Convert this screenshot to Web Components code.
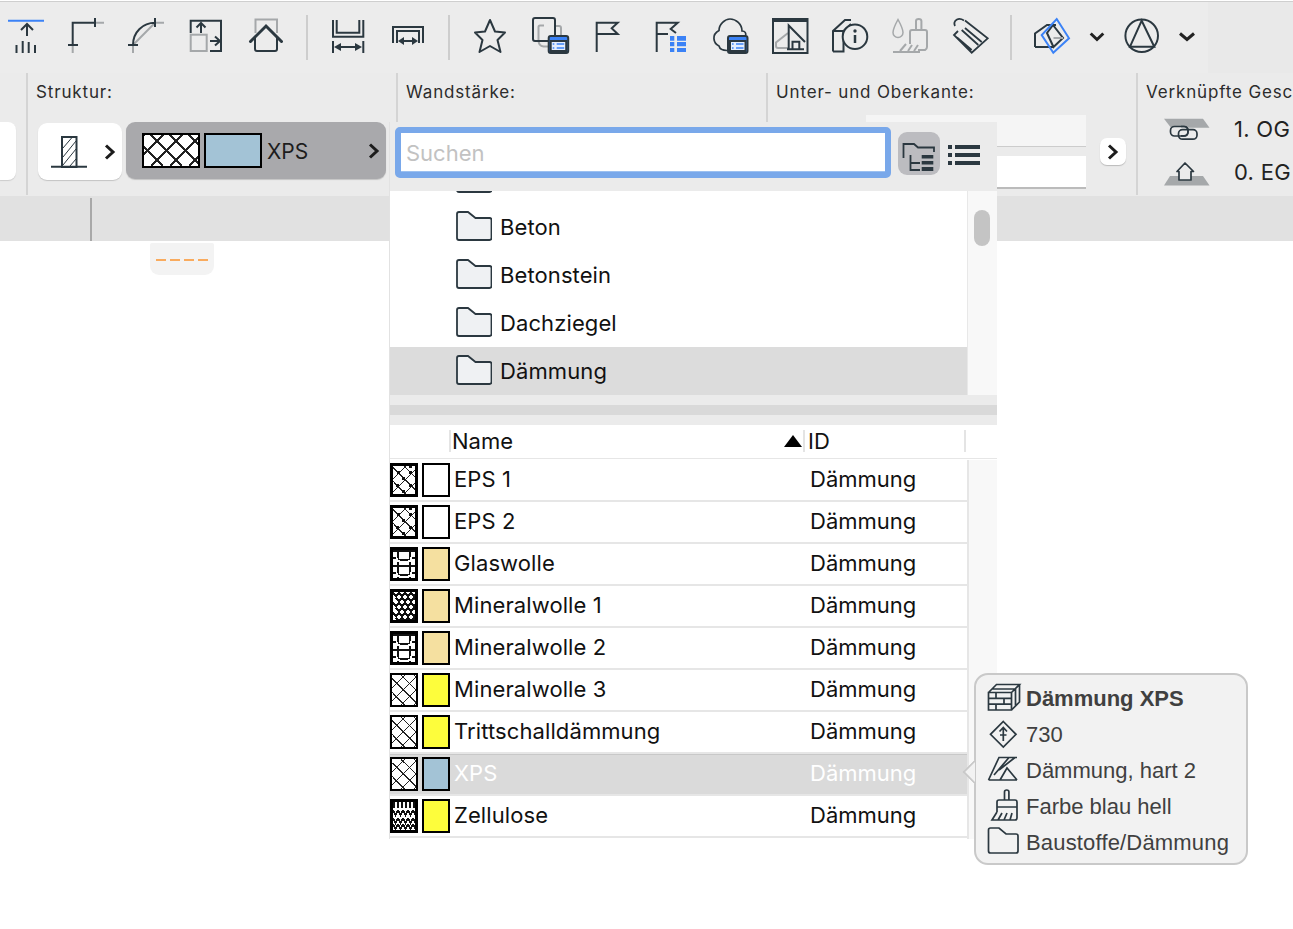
<!DOCTYPE html>
<html lang="de"><head><meta charset="utf-8"><title>Struktur</title>
<style>
html,body{margin:0;padding:0;background:#fff;height:100%;overflow:hidden}
body{font-family:Inter,"Liberation Sans",sans-serif;color:#111;width:1293px;height:929px;position:relative}
</style></head><body>
<app-shell>
  <main-toolbar></main-toolbar>
  <info-box></info-box>
  <sub-band></sub-band>
  <dash-tag></dash-tag>
  <material-popup>
    <folder-row clipped></folder-row>
    <folder-row>Beton</folder-row>
    <folder-row>Betonstein</folder-row>
    <folder-row>Dachziegel</folder-row>
    <folder-row selected>Dämmung</folder-row>
    <mat-row slot="rows" pattern="dots" color="#ffffff" name="EPS 1"></mat-row>
    <mat-row slot="rows" pattern="dots" color="#ffffff" name="EPS 2"></mat-row>
    <mat-row slot="rows" pattern="glas" color="#f5e0a0" name="Glaswolle"></mat-row>
    <mat-row slot="rows" pattern="dense" color="#f5e0a0" name="Mineralwolle 1"></mat-row>
    <mat-row slot="rows" pattern="glas" color="#f5e0a0" name="Mineralwolle 2"></mat-row>
    <mat-row slot="rows" pattern="cross" color="#fdfd3c" name="Mineralwolle 3"></mat-row>
    <mat-row slot="rows" pattern="cross" color="#fdfd3c" name="Trittschalldämmung"></mat-row>
    <mat-row slot="rows" pattern="cross" color="#a3c3d6" name="XPS" selected></mat-row>
    <mat-row slot="rows" pattern="zig" color="#fdfd3c" name="Zellulose"></mat-row>
  </material-popup>
  <info-tip></info-tip>
</app-shell>
<script>
const DK='#2b3840',GR='#a5a8aa',BL='#3b82f6';
const card=(x,y)=>`<rect x="${x}" y="${y}" width="19.500" height="17" rx="2" fill="${BL}"/><rect x="${x+2}" y="${y+5}" width="15.500" height="10" fill="#e3edfe"/><path d="M${x+4} ${y+8}h1.600M${x+8} ${y+8}h7.500M${x+4} ${y+12}h1.600M${x+8} ${y+12}h7.500" stroke="${BL}" stroke-width="1.600" fill="none"/>`;
const TB=[
 {w:57,x:0,b:`<path d="M8 20.700H44" stroke="${BL}" stroke-width="2"/><path d="M27 36V24M21 30l6-6 6 6M16.500 53V45M22.700 53V41M28.700 53V42M35 53V45"/>`},
 {w:60,x:57,b:`<path d="M104 22.700H95M72.700 45v8" stroke="${GR}"/><path d="M72.700 45V22.700H95M95 18v9M68 45h10"/>`},
 {w:60,x:117,b:`<path d="M164 22.700H155L133 45v8" stroke="${GR}"/><path d="M133 45C133 32 143 22.700 155 22.700M155 18v9M128 45h10"/>`},
 {w:60,x:177,b:`<rect x="190.700" y="34.700" width="16" height="16.300" stroke="${GR}"/><path d="M190.700 33V20.700H221V51H210M201 33V23M196.500 27.500l4.500-4.500 4.500 4.500M210 41h10M215 36.500l5 4.500-5 4.500"/>`},
 {w:60,x:237,b:`<path d="M255.500 33V19.500H277V33" stroke="${GR}"/><path d="M250.500 41.500L266 26l15.500 15.500" stroke-width="3" stroke-linecap="round"/><path d="M255 37V49q0 2 2 2H275q2 0 2-2V37"/>`},
 {sep:20},
 {w:60,x:317,b:`<path d="M333 20V36.700H363.300V20M336.700 20V32.700H359.300V20M333 41V53M363.300 41V53M337 47H359"/><path d="M334 47l7-4v8zM362 47l-7-4v8z" fill="${DK}" stroke="none"/>`},
 {w:60,x:377,b:`<path d="M393 43V27H423V43M397 43V31H419V43M402 41H414"/><path d="M398 41l6-4v8zM418 41l-6-4v8z" fill="${DK}" stroke="none"/>`},
 {sep:23},
 {w:60,x:460,b:`<path d="M490 20l5 11.500 10 1-7.500 7.500 3 12-10.500-6-10.500 6 3-12-7.500-7.500 10-1z" stroke-linejoin="round"/>`},
 {w:60,x:520,b:`<path d="M544 25.500H540q-1.500 0-1.500 1.500V40q0 6 5 6.500H549M556 26h3q2 0 2 2v8" stroke="${GR}"/><path d="M548 41H535q-2 0-2-2V20q0-2 2-2H553q2 0 2 2V36"/>${card(548.700,36)}`},
 {w:60,x:580,b:`<path d="M596.700 52V22.700H617.700L611.700 28.300 617.700 34H596.700"/>`},
 {w:60,x:640,b:`<path d="M656.700 52V22.700H677.700L670.700 29 676 33M656.700 34H668"/><path d="M670 36h4.300v4.700H670zM677 36h9v4.700h-9zM670 42h4.300v4.300H670zM677 42h9v4.300h-9zM670 48h4.300v4H670zM677 48h9v4h-9z" fill="${BL}" stroke="none"/>`},
 {w:60,x:700,b:`<path d="M727 50.500C722 50.500 719.500 48 719 46 713 43 711.500 34.500 719 30.500 719 24 725 19 730 19 736 19 742 24 742 31 745 31 746.500 33 745.500 36" stroke-width="1.700"/>${card(728,36)}`},
 {w:60,x:760,b:`<rect x="773" y="19" width="34.500" height="34"/><path d="M772 20H808" stroke-width="4"/><path d="M788 33L776 42.500V46q0 2 2 2H788" stroke="${GR}"/><path d="M788.700 49.300V25.500L805 42M787 49.300H804M792.500 49V41.700H799.300V49"/>`},
 {w:60,x:820,b:`<path d="M833 51.500V31L845 20H851M833 31H843.500V51.500H833M843.500 31L851 24"/><circle cx="855" cy="36.700" r="12.300" fill="#ececec"/><circle cx="855" cy="31" r="1.700" fill="${DK}" stroke="none"/><path d="M855 35V43" stroke-width="2.500"/>`},
 {w:60,x:880,b:`<g stroke="${GR}"><path d="M898 19.500C895 25 893 29 893 32.500a5 5 0 0 0 10 0C903 29 901 25 898 19.500z" stroke-width="1.500"/><path d="M916 29V21q0-2 2.700-2t2.700 2V29M910 44V32q0-2 2-2H925q2 0 2 2V47q0 2-2 3H918"/><path d="M893 52H920M906 44l-6 7M912 45l-4 6M918 45l-4 6"/></g>`},
 {w:60,x:940,b:`<path d="M965 20.500L987.700 38.300 971.700 52.700 954 35L958 31M957 37.500L971.700 50M964 20.500Q960 18 957 19.500Q953 22 955 26M961.700 30L978.300 45M965 28L981.700 42" stroke-width="1.800"/>`},
 {sep:21},
 {w:60,x:1021,b:`<path d="M1035 47V33.500L1047 25H1056M1035 47H1053"/><path d="M1053 25L1063 38 1053.500 47 1047 33z"/><path d="M1053.500 38H1063" stroke="${GR}"/><path d="M1056.700 19L1069 38.300 1053.300 52.700 1041.700 35z" stroke="${BL}"/>`},
 {w:31,x:1081,b:`<path d="M1090.700 33.500L1097 39.500 1103.300 33.500" stroke="#222" stroke-width="3"/>`},
 {w:60,x:1112,b:`<circle cx="1141.700" cy="35.700" r="16.300"/><path d="M1141.700 20.700L1154.300 46.700H1130z"/>`},
 {w:30,x:1172,b:`<path d="M1180 33.500L1187 39.500 1194 33.500" stroke="#222" stroke-width="3"/>`},
];
class MainToolbar extends HTMLElement{constructor(){super();const r=this.attachShadow({mode:'open'});
 r.innerHTML=`<style>:host{display:flex;height:73px;box-sizing:border-box;padding-top:2px;background:linear-gradient(#fff 1px,#cfcfcf 1px,#cfcfcf 2px,#ececec 2px);overflow:hidden}
 svg{display:block;flex:none;margin-top:8px;fill:none;stroke:${DK};stroke-width:2}
 .sep{flex:none;display:flex;justify-content:center;padding-top:13px;box-sizing:border-box;height:58px}
 .sep i{display:block;width:2px;background:#cdcdcd}
 .end{margin-left:auto;width:85px;background:#e9e9e9}</style>`+
 TB.map(t=>t.sep?`<div class="sep" style="width:${t.sep}px"><i></i></div>`:`<svg width="${t.w}" height="52" viewBox="${t.x} 10 ${t.w} 52">${t.b}</svg>`).join('')+`<div class="end"></div>`;}}
customElements.define('main-toolbar',MainToolbar);

class MatSwatch extends HTMLElement{constructor(){super();this.attachShadow({mode:'open'});}
 connectedCallback(){
  const w=+this.getAttribute('w')||28,h=+this.getAttribute('h')||34,c=this.getAttribute('color'),p=this.getAttribute('pattern');
  const heavy=['dots','glas','dense','zig'].includes(p);
  const bw=heavy?3:2;
  let s='';
  const iw=w-2*bw,ih=h-2*bw;
  if(p&&p!=='null'){
   if(p==='dots'||p==='cross'||p==='big'){
    const per=p==='big'?19:13,sw=p==='big'?1.600:1.400;let d='';
    for(let k=-ih;k<iw+ih;k+=per){d+=`M${k} 0L${k+ih} ${ih}M${k+ih} 0L${k} ${ih}`;}
    s=`<path d="${d}" stroke="#222" stroke-width="${sw}" fill="none"/>`;
    if(p==='dots'){s+=`<path d="M16 0h3v2h-3zM4 5h3v3h-3zM16 5h3v3h-3zM9 11h3v3h-3zM3 18h3v3h-3zM16 18h3v3h-3zM9 24h3v3h-3z" fill="#111"/>`;}
   }else if(p==='glas'){
    let d='';for(let y=-3;y<ih;y+=15){d+=`M0 ${y+4}H${iw}M5 ${y}V${y+4}M17 ${y}V${y+4}M5 ${y+4}V${y+10}Q5 ${y+12} 7 ${y+13}H15Q17 ${y+12} 17 ${y+10}V${y+4}M0 ${y+11}H3M19 ${y+11}H${iw}`;}
    s=`<path d="${d}" stroke="#111" stroke-width="1.300" fill="none"/>`;
   }else if(p==='dense'){
    let d='';for(let y=1;y<ih;y+=5){for(let x=(y%2?0:3);x<iw;x+=6){d+=`M${x} ${y}l3 3 3-3`;}}
    s=`<path d="${d}" stroke="#111" stroke-width="1.500" fill="none"/>`;
   }else if(p==='zig'){
    let d='';for(let x=1;x<iw;x+=4){d+=`M${x} 0v6`;}
    for(const y of [8,16,22]){for(let x=0;x<iw;x+=5){d+=`M${x} ${y}l2.500 5 2.500-5`;}}
    s=`<path d="${d}" stroke="#111" stroke-width="1.500" fill="none"/>`;
   }
  }
  this.shadowRoot.innerHTML=`<style>:host{display:block;flex:none;width:${w}px;height:${h}px;box-sizing:border-box;border:${bw}px solid #000;background:${c}}svg{display:block}</style>${s?`<svg width="${iw}" height="${ih}" viewBox="0 0 ${iw} ${ih}" shape-rendering="crispEdges">${s}</svg>`:''}`;
 }}
customElements.define('mat-swatch',MatSwatch);

class InfoSection extends HTMLElement{constructor(){super();const r=this.attachShadow({mode:'open'});
 r.innerHTML=`<style>:host{display:block;flex:none;box-sizing:border-box;border-left:2px solid #d4d4d4;height:122px;overflow:hidden}
 .l{height:35px;line-height:36px;padding:1px 0 0 8px;font-size:17px;letter-spacing:.85px;color:#2c2c2c;white-space:nowrap}</style>
 <div class="l"></div><slot></slot>`;}
 connectedCallback(){this.shadowRoot.querySelector('.l').textContent=this.getAttribute('label')||'';}}
customElements.define('info-section',InfoSection);

const chev=()=>`<svg width="14" height="18" viewBox="0 0 14 18"><path d="M3 2.500L10 9 3 15.500" fill="none" stroke="#1c1c1c" stroke-width="3"/></svg>`;
class InfoBox extends HTMLElement{constructor(){super();const r=this.attachShadow({mode:'open'});
 r.innerHTML=`<style>:host{display:flex;height:123px;background:#ebebeb;overflow:hidden}
 .pre{flex:none;width:26px;box-sizing:border-box;padding-top:49px}
 .pre i{display:block;width:16px;height:58px;background:#fff;border-radius:0 8px 8px 0;box-shadow:0 1px 1px #ccc}
 .st{display:flex;gap:4px;padding:13px 0 0 8px;align-items:flex-start}
 .b1{width:84px;height:57px;margin-left:2px;margin-top:1px;background:#fff;border-radius:9px;box-shadow:0 1px 1px #c4c4c4;display:flex;align-items:center;flex:none}
 .b2{width:260px;height:57px;background:#a9a9ac;border-radius:9px;box-shadow:0 1px 1px #c4c4c4;display:flex;align-items:center;flex:none;padding-left:16px;box-sizing:border-box;gap:4px;font-size:21px;color:#1d1d1d}
 .b2 span{margin:2px 0 0 1px;flex:1}.b2 svg{margin-right:5px}
 .un{padding:6px 0 0 98px;display:flex;gap:14px}
 .fs{width:220px;display:flex;flex-direction:column;gap:9px;flex:none}
 .f1{height:32px;background:#f5f5f5;border-bottom:1px solid #ccc;box-sizing:border-box}
 .f2{height:33px;background:#fff;border-bottom:2px solid #bbb;box-sizing:border-box}
 .go{width:26px;height:27px;margin-top:23px;background:#fff;border-radius:7px;box-shadow:0 1px 1px #bbb;display:flex;align-items:center;justify-content:center;flex:none}
 .ln{display:flex;align-items:center;height:42px;font-size:22px;color:#222;white-space:nowrap;padding-left:22px}
 .ln svg{flex:none;margin-right:19px;fill:none;stroke:${DK};stroke-width:1.700}
 .ln span{letter-spacing:.3px}
 .ln.up span{margin-top:-2px}
 </style>
 <div class="pre"><i></i></div>
 <info-section label="Struktur:" style="width:370px"><div class="st">
  <div class="b1"><svg width="56" height="57" viewBox="38 123 56 57" fill="none" stroke="${DK}" stroke-width="1.600"><rect x="62" y="137" width="14.500" height="30" stroke-width="2"/><path d="M51 166.700H87" stroke-width="2"/><path d="M63 148L72 137.500M63 157L76 141M63 165L76 149M70 166L76 159" stroke-width="1"/></svg><span style="margin-left:9px;display:flex">${chev()}</span></div>
  <div class="b2"><mat-swatch w="58" h="35" pattern="big" color="#fff"></mat-swatch><mat-swatch w="58" h="35" color="#a3c3d6"></mat-swatch><span>XPS</span>${chev()}</div>
 </div></info-section>
 <info-section label="Wandstärke:" style="width:370px"></info-section>
 <info-section label="Unter- und Oberkante:" style="width:370px"><div class="un"><div class="fs"><div class="f1"></div><div class="f2"></div></div><div class="go">${chev()}</div></div></info-section>
 <info-section label="Verknüpfte Gesc" style="width:157px">
  <div class="ln up"><svg width="55" height="42" viewBox="1160 108 55 42"><path d="M1164 117.700H1203L1209.500 126.700H1171z" fill="${GR}" stroke="none"/><rect x="1170.500" y="125.500" width="17.500" height="9.500" rx="4" fill="#ebebeb"/><rect x="1178.500" y="128.700" width="18.500" height="9.500" rx="4"/><path d="M1181 125.500H1184q4 0 4 4.700t-4 4.700H1181"/></svg><span>1. OG</span></div>
  <div class="ln"><svg width="55" height="42" viewBox="1160 150 55 42"><path d="M1170 175H1203L1209.500 184.500H1164z" fill="${GR}" stroke="none"/><path d="M1177 170.500L1185 162 1193.500 170.500H1191V179H1179V170.500z" fill="#ebebeb" stroke-linejoin="round"/></svg><span>0. EG</span></div>
 </info-section>`;}}
customElements.define('info-box',InfoBox);

class SubBand extends HTMLElement{constructor(){super();const r=this.attachShadow({mode:'open'});
 r.innerHTML=`<style>:host{display:block;height:45px;background:#e1e1e1;box-sizing:border-box;padding:2px 0 0 90px}i{display:block;width:2px;height:43px;background:#a8a8a8}</style><i></i>`;}}
customElements.define('sub-band',SubBand);

class DashTag extends HTMLElement{constructor(){super();const r=this.attachShadow({mode:'open'});
 r.innerHTML=`<style>:host{position:absolute;left:150px;top:243px;width:64px;height:32px;background:#f3f3f3;border-radius:2px 2px 9px 9px;display:flex;gap:4px;padding:16px 6px 0;box-sizing:border-box}
 i{display:block;width:10px;height:2px;background:#f9ab5e}</style><i></i><i></i><i></i><i></i>`;}}
customElements.define('dash-tag',DashTag);

class FolderRow extends HTMLElement{constructor(){super();const r=this.attachShadow({mode:'open'});
 r.innerHTML=`<style>:host{display:flex;align-items:center;height:48px;font-size:22px;letter-spacing:.1px;color:#111;padding-left:66px;box-sizing:border-box}
 :host([selected]){background:#dcdcdc}
 svg{flex:none;margin-right:8px;margin-top:-2px}</style>
 <svg width="36" height="30" viewBox="456 211 36 30"><path d="M457 238V214q0-2 2-2H468L475.500 218H489.500q2 0 2 2V238q0 2-2 2H459q-2 0-2-2z" fill="#eff1f3" stroke="${DK}" stroke-width="1.800"/></svg><slot></slot>`;}}
customElements.define('folder-row',FolderRow);

class MatRow extends HTMLElement{constructor(){super();this.attachShadow({mode:'open'});}
 connectedCallback(){const g=a=>this.getAttribute(a);
 this.shadowRoot.innerHTML=`<style>:host{display:flex;align-items:center;height:42px;box-sizing:border-box;border-bottom:2px solid #e6e6e6;gap:4px;font-size:22px;color:#111}
 :host([selected]){background:#dadada;color:#fff;box-shadow:inset 0 1px 0 #c8c8c8}
 .n{width:352px;flex:none;letter-spacing:.1px;margin-top:-2px}.i{flex:none;margin-top:-2px}</style>
 <mat-swatch pattern="${g('pattern')}" color="#fff"></mat-swatch><mat-swatch color="${g('color')}"></mat-swatch><div class="n"></div><div class="i">Dämmung</div>`;
 this.shadowRoot.querySelector('.n').textContent=g('name');}}
customElements.define('mat-row',MatRow);

class MaterialPopup extends HTMLElement{constructor(){super();const r=this.attachShadow({mode:'open'});
 r.innerHTML=`<style>:host{position:absolute;left:389px;top:122px;width:608px;height:717px;display:flex;flex-direction:column;background:#ebebeb;box-sizing:border-box;border-left:1px solid #e2e2e2;font-size:22px;color:#111}
 .head{height:69px;flex:none;display:flex;padding:5px 0 0 5px;box-sizing:border-box;align-items:flex-start}
 .search{width:496px;height:51px;box-sizing:border-box;border:6px solid #79a8ea;border-radius:5px;background:#fff;color:#c2c2c2;padding-left:5px;line-height:40px;flex:none;box-shadow:inset 0 -1px 0 #9cc0f0}
 .tg{width:42px;height:43px;background:#bcbcc0;border-radius:9px;margin:5px 0 0 7px;flex:none}
 .lst{margin:18px 0 0 8px;flex:none}
 .tree{height:204px;flex:none;display:flex;background:#fff;overflow:hidden}
 .tree .c{width:577px;flex:none;height:204px;overflow:hidden}
 .tree .in{margin-top:-36px}
 .sb{flex:1;background:#f8f8f8;border-left:1px solid #e8e8e8;padding:19px 0 0 6px;box-sizing:border-box}
 .sb i{display:block;width:16px;height:36px;border-radius:8px;background:#c4c4c4}
 .split{height:30px;flex:none;box-sizing:border-box;padding-top:10px}.split i{display:block;height:10px;background:#d9d9d9}
 .th{height:35px;flex:none;box-sizing:border-box;display:flex;align-items:center;background:linear-gradient(#fff 33px,#e6e6e6 33px,#e6e6e6 34px,#fff 34px);padding-bottom:3px}
 .th .s{width:2px;height:22px;background:#e4e4e4;flex:none;margin-top:-1px}
 .th span{margin-left:1px;margin-top:-1px}
 .tri{width:0;height:0;border-left:9.500px solid transparent;border-right:9.500px solid transparent;border-bottom:12px solid #000;flex:none;margin:0 1px 0 0}
 .body{display:flex;flex:1;background:#fff}
 .rows{width:577px;flex:none}
 .tr{flex:1;background:#f8f8f8;border-left:2px solid #e6e6e6;box-sizing:border-box}</style>
 <div class="head"><div class="search">Suchen</div>
 <div class="tg"><svg width="42" height="43" viewBox="898 132 42 43" fill="none" stroke="${DK}" stroke-width="1.800"><path d="M903.500 158V144H914L918 147.500H934V152M910.500 155V170H920M910.500 163H920"/><path d="M921.700 155H933.300V158.500H921.700zM921.700 161H933.300V164.500H921.700zM921.700 167H933.300V171H921.700z" fill="${DK}" stroke="none"/></svg></div>
 <svg class="lst" width="32" height="20" viewBox="948 145 32 20" fill="${DK}"><path d="M948 145h4v4h-4zM955 145h25v4h-25zM948 153h4v4h-4zM955 153h25v4h-25zM948 161h4v4h-4zM955 161h25v4h-25z"/></svg></div>
 <div class="tree"><div class="c"><div class="in"><slot></slot></div></div><div class="sb"><i></i></div></div>
 <div class="split"><i></i></div>
 <div class="th"><div style="width:59px;flex:none"></div><div class="s"></div><span style="width:332px;flex:none">Name</span><div class="tri"></div><div class="s"></div><span style="width:156px;flex:none;margin-left:3px">ID</span><div class="s"></div></div>
 <div class="body"><div class="rows"><slot name="rows"></slot></div><div class="tr"></div></div>`;}}
customElements.define('material-popup',MaterialPopup);

const TIP=[
 {t:'Dämmung XPS',b:1,i:`<path d="M988.500 692.500H1011.500V710H988.500zM988.500 692.500L996.500 684.500H1019.500L1011.500 692.500M1019.500 684.500V702L1011.500 710M988.500 698.300H1011.500M988.500 704.200H1011.500M996 692.500V698.300M1004 698.300V704.200M996 704.200V710M1015.500 688.500V706M992 689H1015"/>`},
 {t:'730',i:`<path d="M1003.300 721.500L1016 734.300 1003.300 747 990.500 734.300zM1003.300 741V728M999.500 731.500L1003.300 727.500 1007 731.500M1000 735H1006.500"/>`},
 {t:'Dämmung, hart 2',i:`<path d="M988.500 780H1017M988.500 780L999 757.500H1017M994 775L1009 757.500M999 770L1015 757.500M1000 780L1007 768L1017 780"/>`},
 {t:'Farbe blau hell',i:`<path d="M1004.500 800V792q0-2 2.200-2t2.200 2V800M997 812V802q0-2 2-2H1015q2 0 2 2V818q0 2-2 2H992L997 812M997 807H1017M998 820L1002 813M1004 820L1007 813M1010 820L1012 813"/>`},
 {t:'Baustoffe/Dämmung',i:`<path d="M988.500 851V830q0-2 2-2H999L1006 834H1016q2 0 2 2V851q0 2-2 2H990.500q-2 0-2-2z"/>`},
];
class InfoTip extends HTMLElement{constructor(){super();const r=this.attachShadow({mode:'open'});
 r.innerHTML=`<style>:host{position:absolute;left:974px;top:673px;width:274px;height:192px;box-sizing:border-box;background:#f2f2f2;border:2px solid #c9c9c9;border-radius:14px;padding:6px 0 0 10px;font-family:"Liberation Sans",Arial,sans-serif;font-size:22px;color:#404040;font-variant-ligatures:none}
 .r{display:flex;align-items:center;height:36px;white-space:nowrap}
 .r:last-of-type span{letter-spacing:.17px}
 svg{flex:none;margin-right:4px;margin-top:-2px;fill:none;stroke:${DK};stroke-width:1.700}
 .b{font-weight:700}
 .a{position:absolute;left:-10px;top:88px;width:18px;height:18px;background:#f2f2f2;transform:rotate(45deg);border-left:2px solid #c9c9c9;border-bottom:2px solid #c9c9c9;box-sizing:border-box;clip-path:polygon(0 0,0 100%,100% 100%)}</style><div class="a"></div>`+
 TIP.map((t,k)=>`<div class="r"><svg width="36" height="36" viewBox="986 ${680+36*k} 36 36">${t.i}</svg><span class="${t.b?'b':''}">${t.t}</span></div>`).join('');}}
customElements.define('info-tip',InfoTip);

class AppShell extends HTMLElement{constructor(){super();const r=this.attachShadow({mode:'open'});
 r.innerHTML=`<style>:host{display:block;width:1293px;height:929px;position:relative;overflow:hidden;background:#fff}</style><slot></slot>`;}}
customElements.define('app-shell',AppShell);
</script>
</body></html>
